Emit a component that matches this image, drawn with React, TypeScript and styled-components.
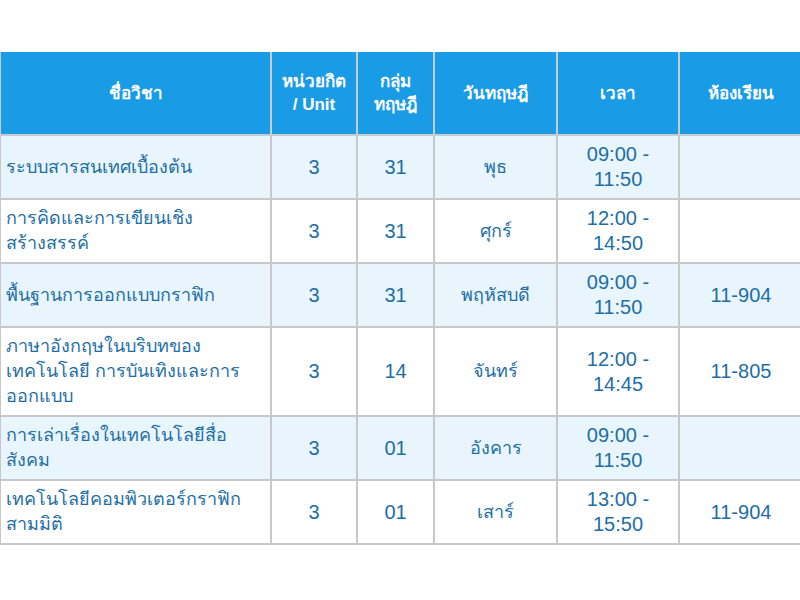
import { Fragment } from "react";
import styled, { createGlobalStyle } from "styled-components";

const GlobalStyle = createGlobalStyle`
  html, body {
    margin: 0;
    padding: 0;
    background: #ffffff;
  }
  body {
    font-family: "Liberation Sans", "Noto Sans", "DejaVu Sans", sans-serif;
    overflow: hidden;
  }
`;

interface Course {
  name: string[];
  unit: string;
  group: string;
  day: string;
  time: string[];
  room: string;
}

const courses: Course[] = [
  { name: ["ระบบสารสนเทศเบื้องต้น"], unit: "3", group: "31", day: "พุธ", time: ["09:00 -", "11:50"], room: "" },
  { name: ["การคิดและการเขียนเชิง", "สร้างสรรค์"], unit: "3", group: "31", day: "ศุกร์", time: ["12:00 -", "14:50"], room: "" },
  { name: ["พื้นฐานการออกแบบกราฟิก"], unit: "3", group: "31", day: "พฤหัสบดี", time: ["09:00 -", "11:50"], room: "11-904" },
  {
    name: ["ภาษาอังกฤษในบริบทของ", "เทคโนโลยี การบันเทิงและการ", "ออกแบบ"],
    unit: "3",
    group: "14",
    day: "จันทร์",
    time: ["12:00 -", "14:45"],
    room: "11-805",
  },
  { name: ["การเล่าเรื่องในเทคโนโลยีสื่อ", "สังคม"], unit: "3", group: "01", day: "อังคาร", time: ["09:00 -", "11:50"], room: "" },
  { name: ["เทคโนโลยีคอมพิวเตอร์กราฟิก", "สามมิติ"], unit: "3", group: "01", day: "เสาร์", time: ["13:00 -", "15:50"], room: "11-904" },
];

const lines = (arr: string[]) =>
  arr.map((t, i) => (
    <Fragment key={i}>
      {i > 0 && <br />}
      {t}
    </Fragment>
  ));

export default function App() {
  return (
    <Page>
      <GlobalStyle />
      <Table>
        <colgroup>
          <col style={{ width: 271 }} />
          <col style={{ width: 86 }} />
          <col style={{ width: 77 }} />
          <col style={{ width: 123 }} />
          <col style={{ width: 122 }} />
          <col style={{ width: 124 }} />
        </colgroup>
        <thead>
          <tr>
            <HeadCell>ชื่อวิชา</HeadCell>
            <HeadCell>
              หน่วยกิต
              <br />/ Unit
            </HeadCell>
            <HeadCell>
              กลุ่ม
              <br />
              ทฤษฎี
            </HeadCell>
            <HeadCell>วันทฤษฎี</HeadCell>
            <HeadCell>เวลา</HeadCell>
            <HeadCell>ห้องเรียน</HeadCell>
          </tr>
        </thead>
        <tbody>
          {courses.map((c, i) => (
            <Row key={i} $alt={i % 2 === 0}>
              <Cell $left>{lines(c.name)}</Cell>
              <Cell>{c.unit}</Cell>
              <Cell>{c.group}</Cell>
              <Cell $thai>{c.day}</Cell>
              <Cell>{lines(c.time)}</Cell>
              <Cell>{c.room}</Cell>
            </Row>
          ))}
        </tbody>
      </Table>
    </Page>
  );
}

const Page = styled.div`
  width: 800px;
  height: 600px;
  padding-top: 52px;
  box-sizing: border-box;
  overflow: hidden;
`;

const Table = styled.table`
  width: 803px;
  table-layout: fixed;
  border-collapse: collapse;
  margin-left: -1px;
`;

const HeadCell = styled.th`
  background: #1a9be6;
  color: #ffffff;
  font-size: 17px;
  font-weight: bold;
  line-height: 23px;
  height: 83px;
  padding: 0 4px;
  text-align: center;
  vertical-align: middle;
  border: 2px solid #c6cdd2;
  border-top: none;
  box-sizing: border-box;
`;

const Row = styled.tr<{ $alt: boolean }>`
  background: ${(p) => (p.$alt ? "#e9f5fd" : "#ffffff")};
`;

const Cell = styled.td<{ $left?: boolean; $thai?: boolean }>`
  color: #1d6ea6;
  font-size: ${(p) => (p.$left || p.$thai ? "18px" : "20px")};
  line-height: 25px;
  padding: 6px 4px 6px ${(p) => (p.$left ? "5px" : "4px")};
  text-align: ${(p) => (p.$left ? "left" : "center")};
  vertical-align: middle;
  border: 2px solid #c8c8c8;
  white-space: nowrap;
`;
